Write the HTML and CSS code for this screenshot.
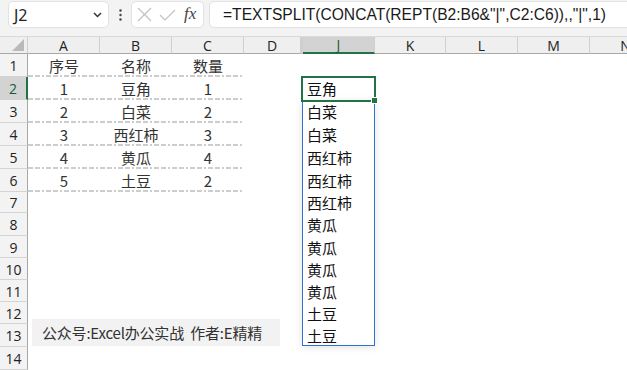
FILE: index.html
```html
<!DOCTYPE html>
<html lang="zh-CN">
<head>
<meta charset="utf-8">
<link rel="stylesheet" href="styles.css">
</head>
<body>
<div class="app">
  <div class="fbar">
    <div class="namebox">
      <span class="ref">J2</span>
      <svg class="chev" width="9" height="6" viewBox="0 0 9 6"><path d="M1 1 L4.5 4.5 L8 1" fill="none" stroke="#333" stroke-width="1.5"/></svg>
    </div>
    <div class="vdots">
      <svg width="3" height="12" viewBox="0 0 3 12"><circle cx="1.5" cy="1.5" r="1.2" fill="#444"/><circle cx="1.5" cy="6" r="1.2" fill="#444"/><circle cx="1.5" cy="10.5" r="1.2" fill="#444"/></svg>
    </div>
    <div class="btns">
      <svg class="ic-x" width="15" height="15" viewBox="0 0 15 15"><path d="M1 1 L14 14 M14 1 L1 14" stroke="#c2c2c2" stroke-width="1.2" fill="none"/></svg>
      <svg class="ic-ok" width="17" height="12" viewBox="0 0 17 12"><path d="M1 6 L6 11 L16 1" fill="none" stroke="#c2c2c2" stroke-width="1.2"/></svg>
      <span class="fx">fx</span>
    </div>
    <div class="formula">=TEXTSPLIT(CONCAT(REPT(B2:B6&amp;"|",C2:C6)),,"|",1)</div>
  </div>

  <div class="sheet">
    <div class="row hdr">
      <div class="corner"><svg width="12" height="12" viewBox="0 0 12 12"><path d="M12 0 L12 12 L0 12 Z" fill="#b9b9b9"/></svg></div>
      <div class="ch">A</div>
      <div class="ch">B</div>
      <div class="ch">C</div>
      <div class="ch">D</div>
      <div class="ch gapc"></div>
      <div class="ch sel">J</div>
      <div class="ch">K</div>
      <div class="ch">L</div>
      <div class="ch">M</div>
      <div class="ch">N</div>
    </div>

    <div class="row h23"><div class="rh">1</div><div class="c u">序号</div><div class="c u">名称</div><div class="c u">数量</div><div></div><div></div><div class="j"></div></div>
    <div class="row h23"><div class="rh sel">2</div><div class="c u">1</div><div class="c u">豆角</div><div class="c u">1</div><div></div><div></div><div class="j">豆角</div></div>
    <div class="row h23"><div class="rh">3</div><div class="c u">2</div><div class="c u">白菜</div><div class="c u">2</div><div></div><div></div><div class="j">白菜</div></div>
    <div class="row h23"><div class="rh">4</div><div class="c u">3</div><div class="c u">西红柿</div><div class="c u">3</div><div></div><div></div><div class="j">白菜</div></div>
    <div class="row h23"><div class="rh">5</div><div class="c u">4</div><div class="c u">黄瓜</div><div class="c u">4</div><div></div><div></div><div class="j">西红柿</div></div>
    <div class="row h23"><div class="rh">6</div><div class="c u">5</div><div class="c u">土豆</div><div class="c u">2</div><div></div><div></div><div class="j">西红柿</div></div>
    <div class="row h21"><div class="rh">7</div><div></div><div></div><div></div><div></div><div></div><div class="j">西红柿</div></div>
    <div class="row h23"><div class="rh">8</div><div></div><div></div><div></div><div></div><div></div><div class="j">黄瓜</div></div>
    <div class="row h22"><div class="rh">9</div><div></div><div></div><div></div><div></div><div></div><div class="j">黄瓜</div></div>
    <div class="row h22"><div class="rh">10</div><div></div><div></div><div></div><div></div><div></div><div class="j">黄瓜</div></div>
    <div class="row h22"><div class="rh">11</div><div></div><div></div><div></div><div></div><div></div><div class="j">黄瓜</div></div>
    <div class="row h22"><div class="rh">12</div><div></div><div></div><div></div><div></div><div></div><div class="j">土豆</div></div>
    <div class="row h23"><div class="rh">13</div><div></div><div></div><div></div><div></div><div></div><div class="j">土豆</div></div>
    <div class="row h23"><div class="rh">14</div></div>

    <div class="spill"></div>
    <div class="active"></div>
    <div class="handle"></div>
    <div class="note">公众号:Excel办公实战&nbsp; 作者:E精精</div>
  </div>
</div>
</body>
</html>
```

FILE: styles.css
```css
* { box-sizing: border-box; }
html, body { margin: 0; padding: 0; background: #fff; }
.app {
  width: 627px;
  height: 370px;
  overflow: hidden;
  font-family: "Noto Sans", "Noto Sans CJK SC", sans-serif;
}

/* formula bar */
.fbar {
  height: 36px;
  background: #f3f3f3;
  display: flex;
  align-items: flex-start;
  padding: 1px 0 0 8px;
  overflow: hidden;
}
.fbar > * { flex: none; }
.namebox {
  width: 101px;
  height: 27px;
  background: #fff;
  border: 1px solid #e2e2e2;
  border-radius: 5px;
  display: flex;
  align-items: center;
  justify-content: space-between;
  padding: 0 6px 0 5px;
}
.ref { font-size: 16px; color: #222; }
.chev { margin-top: 1px; }
.vdots {
  width: 22px;
  height: 27px;
  display: flex;
  align-items: center;
  justify-content: center;
}
.btns {
  width: 73px;
  height: 27px;
  background: #fff;
  border: 1px solid #e2e2e2;
  border-radius: 5px;
  display: flex;
  align-items: center;
  padding-left: 5px;
}
.ic-x { margin-right: 7px; }
.ic-ok { margin-right: 8px; margin-top: 1px; }
.fx {
  font-family: "Liberation Serif", "DejaVu Serif", serif;
  font-style: italic;
  font-size: 17px;
  color: #444;
  margin-top: -2px;
}
.formula {
  margin-left: 5px;
  width: 440px;
  height: 27px;
  background: #fff;
  border: 1px solid #e2e2e2;
  border-radius: 5px;
  display: flex;
  align-items: center;
  padding-left: 13px;
  font-family: "Liberation Sans", Arial, sans-serif;
  font-size: 15.6px;
  color: #1a1a1a;
  white-space: nowrap;
}

/* sheet */
.sheet { position: relative; }
.row {
  display: grid;
  grid-template-columns: 28px 72px 72px 72px 57px 2px 72px 71px 72px 72px 72px;
}
.h23 { height: 23px; }
.h22 { height: 22px; }
.h21 { height: 21px; }

.hdr {
  height: 18px;
  background: #efefef;
  border-top: 1px solid #dadada;
}
.corner {
  border-right: 1px solid #cfcfcf;
  border-bottom: 1px solid #a8a8a8;
  display: flex;
  align-items: flex-end;
  justify-content: flex-end;
  padding: 0 3px 2px 0;
}
.ch {
  border-right: 1px solid #cfcfcf;
  border-bottom: 1px solid #a8a8a8;
  font-family: "Open Sans", "Noto Sans", sans-serif;
  font-size: 14px;
  color: #222;
  display: flex;
  align-items: center;
  justify-content: center;
  line-height: 1;
  padding-top: 1px;
}
.ch.gapc { border-left: 1px solid #cfcfcf; border-right: 1px solid #cfcfcf; }
.ch.sel {
  background: #d3d3d3;
  border-bottom: 2px solid #217346;
  color: #185c37;
}

.rh {
  background: #f3f3f3;
  border-right: 1px solid #a8a8a8;
  border-bottom: 1px solid #d4d4d4;
  font-family: "Open Sans", "Noto Sans", sans-serif;
  font-size: 14px;
  color: #222;
  display: flex;
  align-items: center;
  justify-content: center;
  line-height: 1;
  padding-top: 2px;
}
.rh.sel {
  background: #d3d3d3;
  border-right: 2px solid #217346;
  color: #185c37;
}

.c {
  display: flex;
  align-items: center;
  justify-content: center;
  font-family: "Noto Sans CJK SC", "Noto Sans", sans-serif;
  font-size: 15px;
  color: #333;
  line-height: 1;
  white-space: nowrap;
}
.u {
  background-image: repeating-linear-gradient(to right,
    #cdcdcd 0 5px, transparent 5px 7px,
    #cdcdcd 7px 12px, transparent 12px 14px,
    #cdcdcd 14px 16px, transparent 16px 18px);
  background-size: 100% 2px;
  background-position: 0 100%;
  background-repeat: no-repeat;
}
.j {
  display: flex;
  align-items: center;
  padding-left: 4px;
  font-family: "Noto Sans CJK SC", "Noto Sans", sans-serif;
  font-size: 15px;
  color: #111;
  line-height: 1;
  white-space: nowrap;
}

/* overlays */
.spill {
  position: absolute;
  left: 302px;
  top: 65px;
  width: 73px;
  height: 245px;
  border: 1px solid #2f6fd6;
  box-shadow: 0 1px 8px rgba(0, 0, 0, 0.12);
}
.active {
  position: absolute;
  left: 301px;
  top: 40px;
  width: 75px;
  height: 26px;
  border: 2px solid #217346;
}
.handle {
  position: absolute;
  left: 371px;
  top: 61px;
  width: 7px;
  height: 7px;
  background: #217346;
  border: 1px solid #fff;
}
.note {
  position: absolute;
  left: 32px;
  top: 283px;
  width: 248px;
  height: 27px;
  background: #f2f2f2;
  display: flex;
  align-items: center;
  padding-left: 10px;
  font-family: "Noto Sans CJK SC", "Noto Sans", sans-serif;
  font-size: 15px;
  color: #333;
  white-space: nowrap;
  letter-spacing: -0.2px;
}
```
